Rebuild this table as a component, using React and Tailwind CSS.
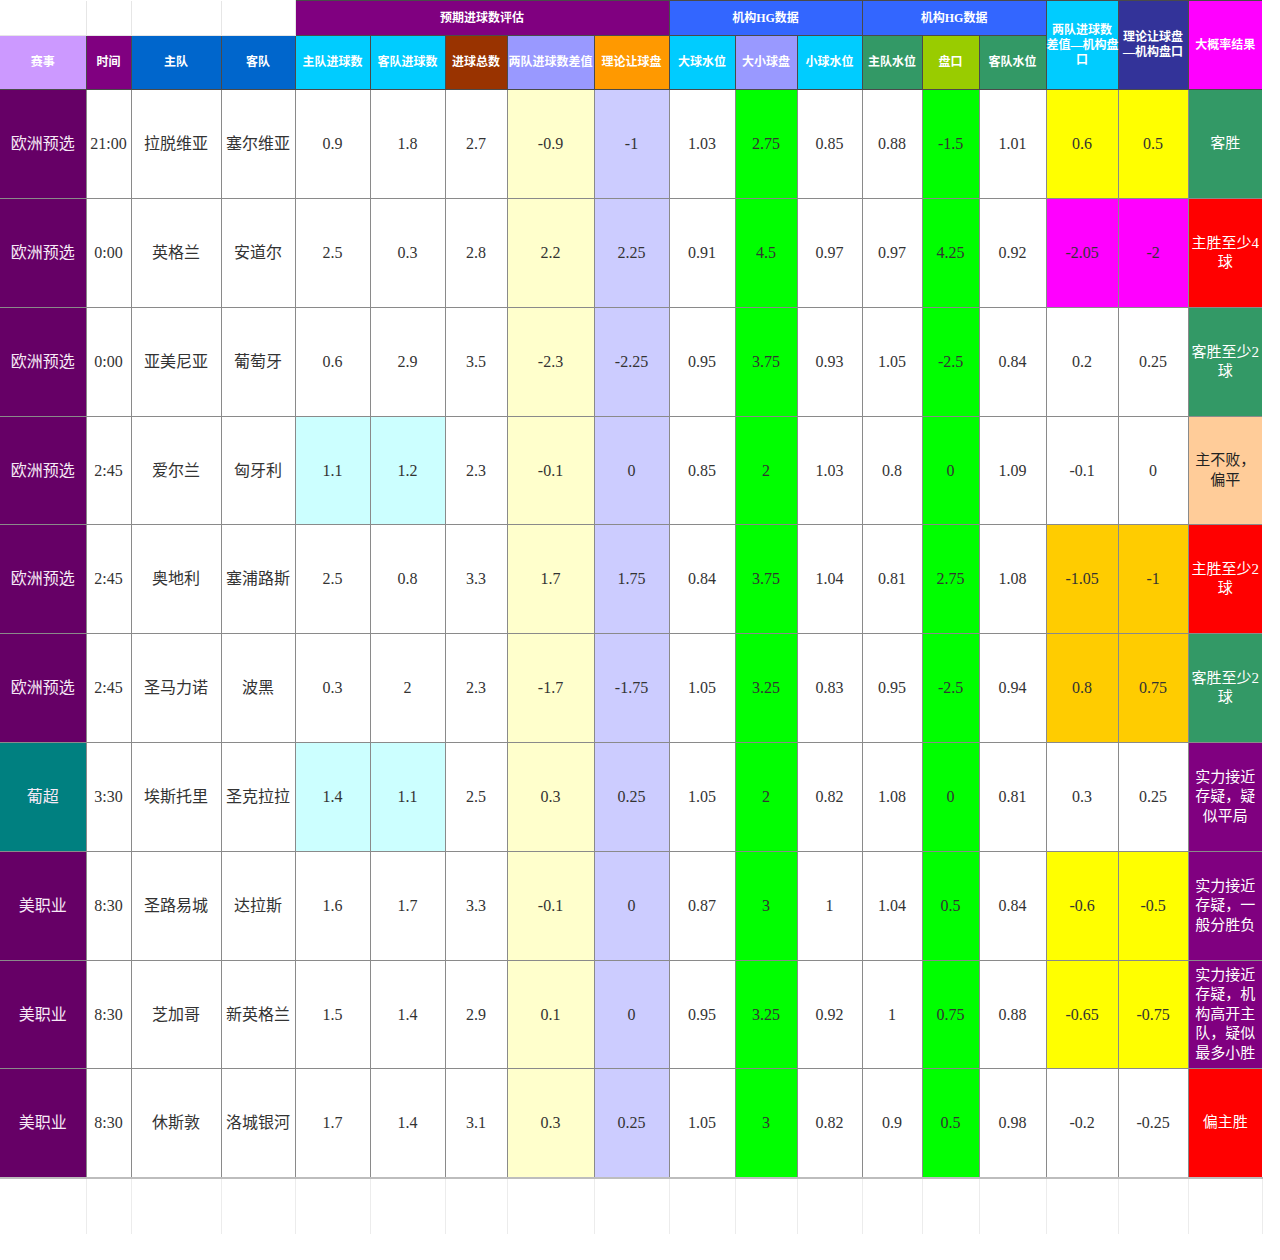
import React from 'react'

const rows = [
  { league: '欧洲预选', lg: 'bg-[#660066]', time: '21:00', home: '拉脱维亚', away: '塞尔维亚', hg: '0.9', ag: '1.8', tot: '2.7', diff: '-0.9', theo: '-1', big: '1.03', ou: '2.75', small: '0.85', hw: '0.88', line: '-1.5', aw: '1.01', d1: '0.6', d2: '0.5', dbg: 'bg-[#ffff00]', res: '客胜', rbg: 'bg-[#339966] text-white', h: 'h-[109px]' },
  { league: '欧洲预选', lg: 'bg-[#660066]', time: '0:00', home: '英格兰', away: '安道尔', hg: '2.5', ag: '0.3', tot: '2.8', diff: '2.2', theo: '2.25', big: '0.91', ou: '4.5', small: '0.97', hw: '0.97', line: '4.25', aw: '0.92', d1: '-2.05', d2: '-2', dbg: 'bg-[#ff00ff]', res: '主胜至少4球', rbg: 'bg-[#ff0000] text-white', h: 'h-[109px]' },
  { league: '欧洲预选', lg: 'bg-[#660066]', time: '0:00', home: '亚美尼亚', away: '葡萄牙', hg: '0.6', ag: '2.9', tot: '3.5', diff: '-2.3', theo: '-2.25', big: '0.95', ou: '3.75', small: '0.93', hw: '1.05', line: '-2.5', aw: '0.84', d1: '0.2', d2: '0.25', dbg: 'bg-white', res: '客胜至少2球', rbg: 'bg-[#339966] text-white', h: 'h-[109px]' },
  { league: '欧洲预选', lg: 'bg-[#660066]', time: '2:45', home: '爱尔兰', away: '匈牙利', hg: '1.1', ag: '1.2', tot: '2.3', diff: '-0.1', theo: '0', big: '0.85', ou: '2', small: '1.03', hw: '0.8', line: '0', aw: '1.09', d1: '-0.1', d2: '0', dbg: 'bg-white', res: '主不败，偏平', rbg: 'bg-[#ffcc99] text-[#222]', gbg: 'bg-[#ccffff]', h: 'h-[108px]' },
  { league: '欧洲预选', lg: 'bg-[#660066]', time: '2:45', home: '奥地利', away: '塞浦路斯', hg: '2.5', ag: '0.8', tot: '3.3', diff: '1.7', theo: '1.75', big: '0.84', ou: '3.75', small: '1.04', hw: '0.81', line: '2.75', aw: '1.08', d1: '-1.05', d2: '-1', dbg: 'bg-[#ffcc00]', res: '主胜至少2球', rbg: 'bg-[#ff0000] text-white', h: 'h-[109px]' },
  { league: '欧洲预选', lg: 'bg-[#660066]', time: '2:45', home: '圣马力诺', away: '波黑', hg: '0.3', ag: '2', tot: '2.3', diff: '-1.7', theo: '-1.75', big: '1.05', ou: '3.25', small: '0.83', hw: '0.95', line: '-2.5', aw: '0.94', d1: '0.8', d2: '0.75', dbg: 'bg-[#ffcc00]', res: '客胜至少2球', rbg: 'bg-[#339966] text-white', h: 'h-[109px]' },
  { league: '葡超', lg: 'bg-[#008080]', time: '3:30', home: '埃斯托里', away: '圣克拉拉', hg: '1.4', ag: '1.1', tot: '2.5', diff: '0.3', theo: '0.25', big: '1.05', ou: '2', small: '0.82', hw: '1.08', line: '0', aw: '0.81', d1: '0.3', d2: '0.25', dbg: 'bg-white', res: '实力接近存疑，疑似平局', rbg: 'bg-[#800080] text-white', gbg: 'bg-[#ccffff]', h: 'h-[109px]' },
  { league: '美职业', lg: 'bg-[#660066]', time: '8:30', home: '圣路易城', away: '达拉斯', hg: '1.6', ag: '1.7', tot: '3.3', diff: '-0.1', theo: '0', big: '0.87', ou: '3', small: '1', hw: '1.04', line: '0.5', aw: '0.84', d1: '-0.6', d2: '-0.5', dbg: 'bg-[#ffff00]', res: '实力接近存疑，一般分胜负', rbg: 'bg-[#800080] text-white', h: 'h-[109px]' },
  { league: '美职业', lg: 'bg-[#660066]', time: '8:30', home: '芝加哥', away: '新英格兰', hg: '1.5', ag: '1.4', tot: '2.9', diff: '0.1', theo: '0', big: '0.95', ou: '3.25', small: '0.92', hw: '1', line: '0.75', aw: '0.88', d1: '-0.65', d2: '-0.75', dbg: 'bg-[#ffff00]', res: '实力接近存疑，机构高开主队，疑似最多小胜', rbg: 'bg-[#800080] text-white', h: 'h-[108px]' },
  { league: '美职业', lg: 'bg-[#660066]', time: '8:30', home: '休斯敦', away: '洛城银河', hg: '1.7', ag: '1.4', tot: '3.1', diff: '0.3', theo: '0.25', big: '1.05', ou: '3', small: '0.82', hw: '0.9', line: '0.5', aw: '0.98', d1: '-0.2', d2: '-0.25', dbg: 'bg-white', res: '偏主胜', rbg: 'bg-[#ff0000] text-white', h: 'h-[109px]' },
]

const td = 'border border-[#8a8a8a] text-center align-middle p-0'
const th = 'border border-[#4a4a4a] text-center align-middle p-0 text-white font-semibold text-[12px] leading-[15px] whitespace-nowrap'

const App = () => {
  return (
    <div className="w-[1280px] h-[1260px] bg-white font-['Liberation_Serif','Noto_Sans_CJK_SC',serif] text-[16px] text-[#333]">
      <table className="table-fixed border-collapse w-[1262px]">
        <colgroup>
          <col className="w-[86px]" />
          <col className="w-[45px]" />
          <col className="w-[90px]" />
          <col className="w-[74px]" />
          <col className="w-[75px]" />
          <col className="w-[75px]" />
          <col className="w-[62px]" />
          <col className="w-[87px]" />
          <col className="w-[75px]" />
          <col className="w-[66px]" />
          <col className="w-[62px]" />
          <col className="w-[65px]" />
          <col className="w-[60px]" />
          <col className="w-[57px]" />
          <col className="w-[67px]" />
          <col className="w-[72px]" />
          <col className="w-[70px]" />
          <col className="w-[74px]" />
        </colgroup>
        <thead>
          <tr className="h-[35px]">
            <th className="border border-[#e6e6e6] border-t-0 border-l-0 bg-white" />
            <th className="border border-[#e6e6e6] border-t-0 bg-white" />
            <th className="border border-[#e6e6e6] border-t-0 bg-white" />
            <th className="border border-[#e6e6e6] border-t-0 bg-white" />
            <th colSpan={5} className={`${th} bg-[#800080]`}>预期进球数评估</th>
            <th colSpan={3} className={`${th} bg-[#3366ff]`}>机构HG数据</th>
            <th colSpan={3} className={`${th} bg-[#3366ff]`}>机构HG数据</th>
            <th rowSpan={2} className={`${th} bg-[#00ccff] text-[11px] leading-[14px]`}>两队进球数<br />差值—机构盘<br />口</th>
            <th rowSpan={2} className={`${th} bg-[#333399] text-[11px] leading-[14px]`}>理论让球盘<br />—机构盘口</th>
            <th rowSpan={2} className={`${th} bg-[#ff00ff] border-r-0`}>大概率结果</th>
          </tr>
          <tr className="h-[54px]">
            <th className={`${th} bg-[#cc99ff] border-l-0`}>赛事</th>
            <th className={`${th} bg-[#800080]`}>时间</th>
            <th className={`${th} bg-[#0066cc]`}>主队</th>
            <th className={`${th} bg-[#0066cc]`}>客队</th>
            <th className={`${th} bg-[#00ccff]`}>主队进球数</th>
            <th className={`${th} bg-[#00ccff]`}>客队进球数</th>
            <th className={`${th} bg-[#993300]`}>进球总数</th>
            <th className={`${th} bg-[#9999ff] text-[11.5px]`}>两队进球数差值</th>
            <th className={`${th} bg-[#ff9900]`}>理论让球盘</th>
            <th className={`${th} bg-[#00ccff]`}>大球水位</th>
            <th className={`${th} bg-[#9999ff]`}>大小球盘</th>
            <th className={`${th} bg-[#00ccff]`}>小球水位</th>
            <th className={`${th} bg-[#339966]`}>主队水位</th>
            <th className={`${th} bg-[#99cc00]`}>盘口</th>
            <th className={`${th} bg-[#339966]`}>客队水位</th>
          </tr>
        </thead>
        <tbody>
          {rows.map((r, i) => (
            <tr key={i} className={r.h}>
              <td className={`${td} ${r.lg} text-[#f6eaf6] border-l-0`}>{r.league}</td>
              <td className={td}>{r.time}</td>
              <td className={td}>{r.home}</td>
              <td className={td}>{r.away}</td>
              <td className={`${td} ${r.gbg || 'bg-white'}`}>{r.hg}</td>
              <td className={`${td} ${r.gbg || 'bg-white'}`}>{r.ag}</td>
              <td className={td}>{r.tot}</td>
              <td className={`${td} bg-[#ffffcc]`}>{r.diff}</td>
              <td className={`${td} bg-[#ccccff]`}>{r.theo}</td>
              <td className={td}>{r.big}</td>
              <td className={`${td} bg-[#00ff00]`}>{r.ou}</td>
              <td className={td}>{r.small}</td>
              <td className={td}>{r.hw}</td>
              <td className={`${td} bg-[#00ff00]`}>{r.line}</td>
              <td className={td}>{r.aw}</td>
              <td className={`${td} ${r.dbg}`}>{r.d1}</td>
              <td className={`${td} ${r.dbg}`}>{r.d2}</td>
              <td className={`${td} ${r.rbg} border-r-0 text-[15px] leading-[19.5px]`}>{r.res}</td>
            </tr>
          ))}
          <tr className="h-[56px]">
            {Array.from({ length: 18 }).map((_, i) => (
              <td key={i} className="border-x border-t-2 border-x-[#ececec] border-t-[#bdbdbd] first:border-l-0" />
            ))}
          </tr>
        </tbody>
      </table>
    </div>
  )
}

export default App
